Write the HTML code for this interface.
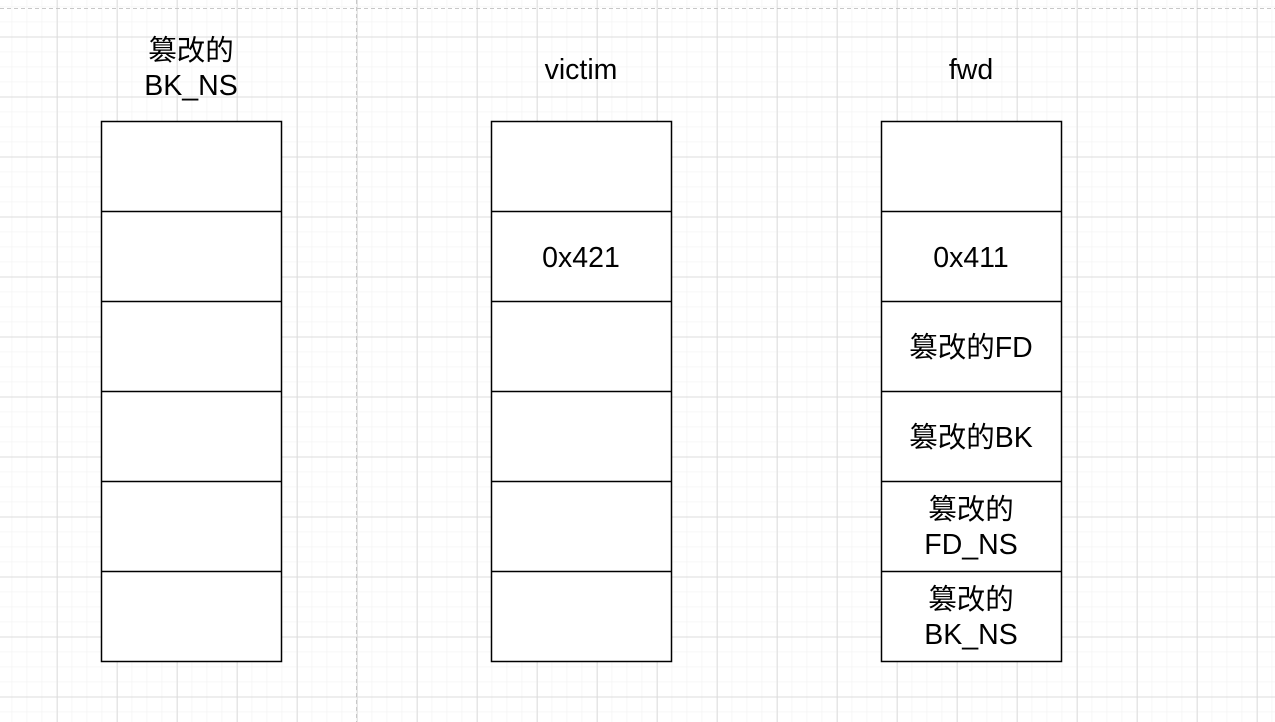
<!DOCTYPE html>
<html><head><meta charset="utf-8"><style>
html,body{margin:0;padding:0;background:#fff;}
svg{display:block;}
text{font-family:"Liberation Sans","Noto Sans CJK SC",sans-serif;font-size:28.5px;fill:#000;text-anchor:middle;}
</style></head><body>
<svg width="1275" height="722" xmlns="http://www.w3.org/2000/svg">
<defs>
<pattern id="minor" x="11.7" y="6.7" width="15" height="15" patternUnits="userSpaceOnUse">
<path d="M0 0H15M0 0V15" stroke="#f0f0f0" stroke-width="1" fill="none"/>
</pattern>
<pattern id="major" x="56.7" y="36.5" width="60" height="60" patternUnits="userSpaceOnUse">
<path d="M0 0.5H60M0.5 0V60" stroke="#dcdcdc" stroke-width="1" fill="none"/>
</pattern>
</defs>
<rect width="1275" height="722" fill="url(#minor)"/>
<rect width="1275" height="722" fill="url(#major)"/>
<path d="M0 8.5H1275M356.5 0V722" stroke="#c8c8c8" stroke-dasharray="4 3" fill="none"/>
<g fill="#fff" stroke="#000" stroke-width="1.5">
<rect x="101.5" y="121.5" width="180" height="540"/>
<rect x="491.5" y="121.5" width="180" height="540"/>
<rect x="881.5" y="121.5" width="180" height="540"/>
<path d="M101 211.5H282M101 301.5H282M101 391.5H282M101 481.5H282M101 571.5H282"/>
<path d="M491 211.5H672M491 301.5H672M491 391.5H672M491 481.5H672M491 571.5H672"/>
<path d="M881 211.5H1062M881 301.5H1062M881 391.5H1062M881 481.5H1062M881 571.5H1062"/>
</g>
<text x="191" y="60">篡改的</text>
<text x="191" y="95">BK_NS</text>
<text x="581" y="79">victim</text>
<text x="971" y="79">fwd</text>
<text x="581" y="267">0x421</text>
<text x="971" y="267">0x411</text>
<text x="971" y="357">篡改的FD</text>
<text x="971" y="447">篡改的BK</text>
<text x="971" y="519">篡改的</text>
<text x="971" y="554">FD_NS</text>
<text x="971" y="609">篡改的</text>
<text x="971" y="644">BK_NS</text>
</svg>
</body></html>
